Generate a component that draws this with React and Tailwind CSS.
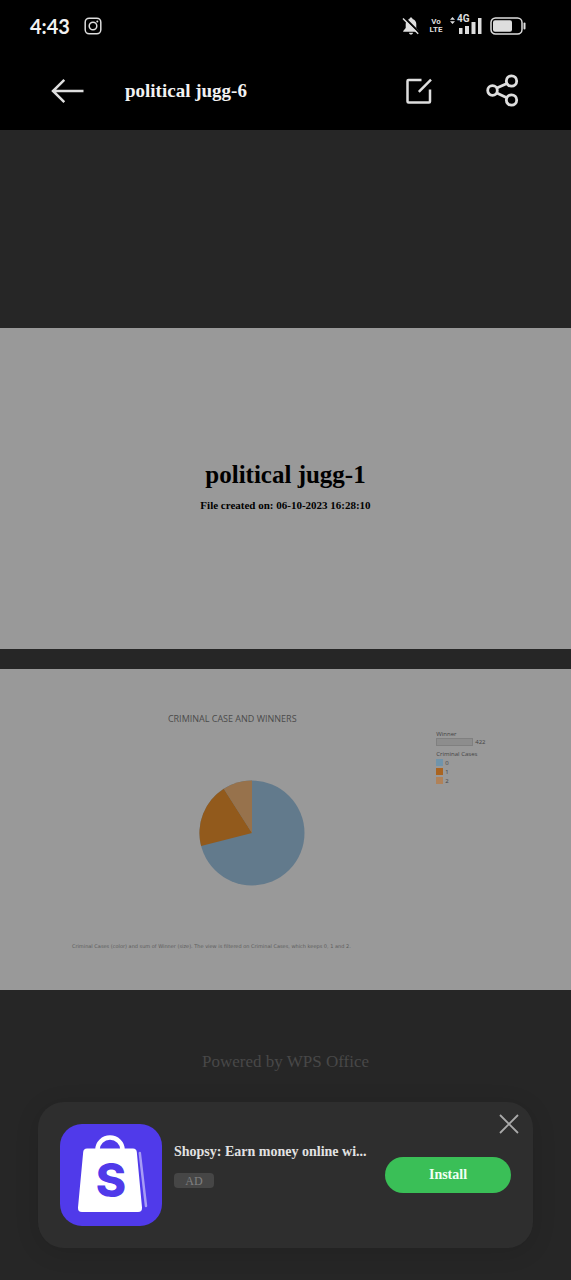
const serif = "font-['Liberation_Serif',serif]";

function StatusBar() {
  return (
    <div className="flex h-[51px] items-center justify-between pr-[45px] pl-[30px] text-[#dedede]">
      <div className="flex items-center gap-3.5">
        <span className="font-['Lato',sans-serif] text-xl leading-6 font-bold text-[#f2f2f2]">4:43</span>
        <svg viewBox="0 0 18 18" className="size-[18px]" fill="none" stroke="currentColor" strokeWidth="1.5" aria-label="Instagram">
          <rect x="1.2" y="1.2" width="15.6" height="15.6" rx="4" />
          <circle cx="9" cy="9" r="3.8" />
          <circle cx="13.3" cy="4.6" r="1" fill="currentColor" stroke="none" />
        </svg>
      </div>
      <div className="flex items-center">
        <svg viewBox="0 0 18 18" className="size-[18px]" fill="currentColor" aria-label="Silent">
          <path d="M9 0.5c.9 0 1.5.6 1.5 1.4C13 2.6 14.300 4.600 14.300 7v4l2.500 3v.8H1.200V14l2.500-3V7c0-2.400 1.300-4.400 3.800-5.100C7.500 1.100 8.100.5 9 .5zM7 15.800h4c0 1-.9 1.800-2 1.800s-2-.8-2-1.800z" />
          <path d="M2.300 .6 17 15.300" stroke="#000" strokeWidth="2.200" />
          <path d="M1 1.500 16.200 16.700" stroke="currentColor" strokeWidth="1.500" />
        </svg>
        <div className="ml-2.5 flex w-3 flex-col items-center font-['Roboto',sans-serif] text-[8px] leading-2 font-bold">
          <span>Vo</span>
          <span>LTE</span>
        </div>
        <div className="relative ml-2 h-[18px] w-8">
          <svg viewBox="0 0 32 18" className="h-[18px] w-8" fill="currentColor" aria-label="Signal">
            <path d="M2.500 0 5 2.800H0zM2.500 7 0 4.200h5z" />
            <rect x="9" y="11" width="3.500" height="6" />
            <rect x="15" y="9" width="4" height="8" />
            <rect x="21.500" y="5" width="4" height="12" />
            <rect x="28" y="1" width="3.500" height="16" />
          </svg>
          <span className="absolute -top-1 left-[7px] bg-black font-['Roboto',sans-serif] text-[10px] leading-3 font-bold">4G</span>
        </div>
        <svg viewBox="0 0 36 18" className="ml-2 h-[18px] w-9" fill="none" stroke="currentColor" strokeWidth="1.500" aria-label="Battery">
          <rect x="1" y="1" width="31" height="16" rx="4.500" />
          <rect x="3" y="3.200" width="19" height="11.600" rx="2" fill="currentColor" stroke="none" />
          <path d="M34.500 6.500v5" strokeWidth="2" strokeLinecap="round" />
        </svg>
      </div>
    </div>
  );
}

function Toolbar() {
  return (
    <header className="flex h-[79px] items-center pr-[52px] pl-[51px] text-[#dedede]">
      <button type="button" aria-label="Back">
        <svg viewBox="0 0 33 26" className="h-[26px] w-[33px]" fill="none" stroke="currentColor" strokeWidth="2.500">
          <path d="M32.500 13H2M13.300 1.800 2 13l11.300 11.200" />
        </svg>
      </button>
      <h1 className={`${serif} ml-[41px] flex-1 text-[19px] leading-6 font-bold text-[#f2f2f2]`}>political jugg-6</h1>
      <button type="button" aria-label="Edit">
        <svg viewBox="0 0 26 26" className="size-[26px]" fill="none" stroke="currentColor" strokeWidth="2.500" strokeLinejoin="round">
          <path d="M15.500 2H2.500Q1.500 2 1.500 3v20.500q0 1 1 1h20.500q1 0 1-1V11.500" />
          <path d="M12.800 13.800 25 1.600" />
        </svg>
      </button>
      <button type="button" aria-label="Share" className="ml-[54px]">
        <svg viewBox="0 0 33 33" className="size-[33px]" fill="none" stroke="currentColor" strokeWidth="2.800">
          <circle cx="6.500" cy="16.500" r="4.800" />
          <circle cx="25.500" cy="7" r="5.200" />
          <circle cx="25.500" cy="26" r="5.200" />
          <path d="M10.800 14 21 9.500M10.800 19l10 4.800" />
        </svg>
      </button>
    </header>
  );
}

function Legend() {
  return (
    <aside className="pt-[61px] font-['Open_Sans',sans-serif] text-[6px] leading-2 text-[#444]">
      <p>Winner</p>
      <p className="flex items-center gap-0.5">
        <span className="h-2 w-[37px] border border-[#808080] bg-[#8d8d8d]" />
        422
      </p>
      <p className="mt-1">Criminal Cases</p>
      <ul>
        <li className="flex h-[9px] items-center gap-0.5"><span className="size-[7px] bg-[#7094ab]" />0</li>
        <li className="flex h-[9px] items-center gap-0.5"><span className="size-[7px] bg-[#aa6420]" />1</li>
        <li className="flex h-[9px] items-center gap-0.5"><span className="size-[7px] bg-[#b08259]" />2</li>
      </ul>
    </aside>
  );
}

function ChartPage() {
  return (
    <section className="flex aspect-video w-full bg-[#999] pl-[12.600%]">
      <div className="flex w-[73%] flex-col">
        <div className="flex w-[88%] flex-col items-center pt-11">
          <h3 className="font-['Open_Sans',sans-serif] text-[9px] leading-3 whitespace-nowrap text-[#4b4b4b]">CRIMINAL CASE AND WINNERS</h3>
          <svg viewBox="0 0 106 106" className="mt-[55px] ml-10 size-[106px]" role="img" aria-label="Criminal case and winners">
            <circle cx="53" cy="53" r="52.500" fill="#627a8c" />
            <path d="M53 53 2.100 66A52.500 52.500 0 0 1 24.800 8.700Z" fill="#925a1c" />
            <path d="M53 53 24.800 8.700A52.500 52.500 0 0 1 53 .5Z" fill="#97724c" />
          </svg>
        </div>
        <p className="mt-14 font-['DejaVu_Sans',sans-serif] text-[5px] leading-2 whitespace-nowrap text-[#5c5c5c]">
          Criminal Cases (color) and sum of Winner (size). The view is filtered on Criminal Cases, which keeps 0, 1 and 2.
        </p>
      </div>
      <Legend />
    </section>
  );
}

function AdCard() {
  return (
    <aside className="relative mx-[38px] flex rounded-[26px] bg-[#2e2e2e] p-[22px] shadow-[0_4px_24px_rgba(0,0,0,0.12)]">
      <svg viewBox="0 0 102 102" className="size-[102px] shrink-0" role="img" aria-label="Shopsy">
        <rect width="102" height="102" rx="22" fill="#503aea" />
        <path d="M37.500 27v-1.500a12.500 12 0 0 1 25 0V27" fill="none" stroke="#fff" strokeWidth="4.500" />
        <path d="M27 24.500h46q3.500 0 3.800 3.500L82 83.500q.3 4.500-4 4.500H22q-4.300 0-4-4.500L23.200 28q.3-3.500 3.800-3.500Z" fill="#fff" />
        <path d="m79.800 29 6.200 53" fill="none" stroke="#a79cf5" strokeWidth="2.500" strokeLinecap="round" />
        <text x="51" y="73" textAnchor="middle" fill="#503aea" className="font-['Inter',sans-serif] text-[46px] font-extrabold">S</text>
      </svg>
      <div className="ml-3 min-w-0 flex-1 pt-4">
        <p className={`${serif} text-sm leading-6 font-bold whitespace-nowrap text-[#e2e2e2]`}>Shopsy: Earn money online wi...</p>
        <span className={`${serif} mt-[9px] flex h-[15px] w-10 items-center justify-center rounded bg-[#464646] text-xs text-[#808080]`}>AD</span>
      </div>
      <button type="button" className={`${serif} mt-[33px] ml-3 h-9 w-[126px] shrink-0 rounded-full bg-[#3abf57] text-sm font-bold text-[#f0fff3]`}>Install</button>
      <button type="button" aria-label="Close ad" className="absolute top-3 right-3.5 text-[#aaa]">
        <svg viewBox="0 0 20 20" className="size-5" fill="none" stroke="currentColor" strokeWidth="1.800">
          <path d="m1 1 18 18M19 1 1 19" />
        </svg>
      </button>
    </aside>
  );
}

export default function App() {
  return (
    <div className="min-h-screen bg-[#262626]">
      <div className="bg-black">
        <StatusBar />
        <Toolbar />
      </div>
      <main className="pt-[198px]">
        <section className={`${serif} flex aspect-video w-full flex-col items-center justify-center bg-[#999] pb-2 text-black`}>
          <h2 className="text-[25px] leading-9 font-bold">political jugg-1</h2>
          <p className="mt-1 text-[11px] leading-4 font-bold">File created on: 06-10-2023 16:28:10</p>
        </section>
        <div className="h-5" />
        <ChartPage />
        <p className={`${serif} pt-[60px] pb-7 text-center text-[17px] leading-6 text-[#484848]`}>Powered by WPS Office</p>
        <AdCard />
      </main>
    </div>
  );
}
